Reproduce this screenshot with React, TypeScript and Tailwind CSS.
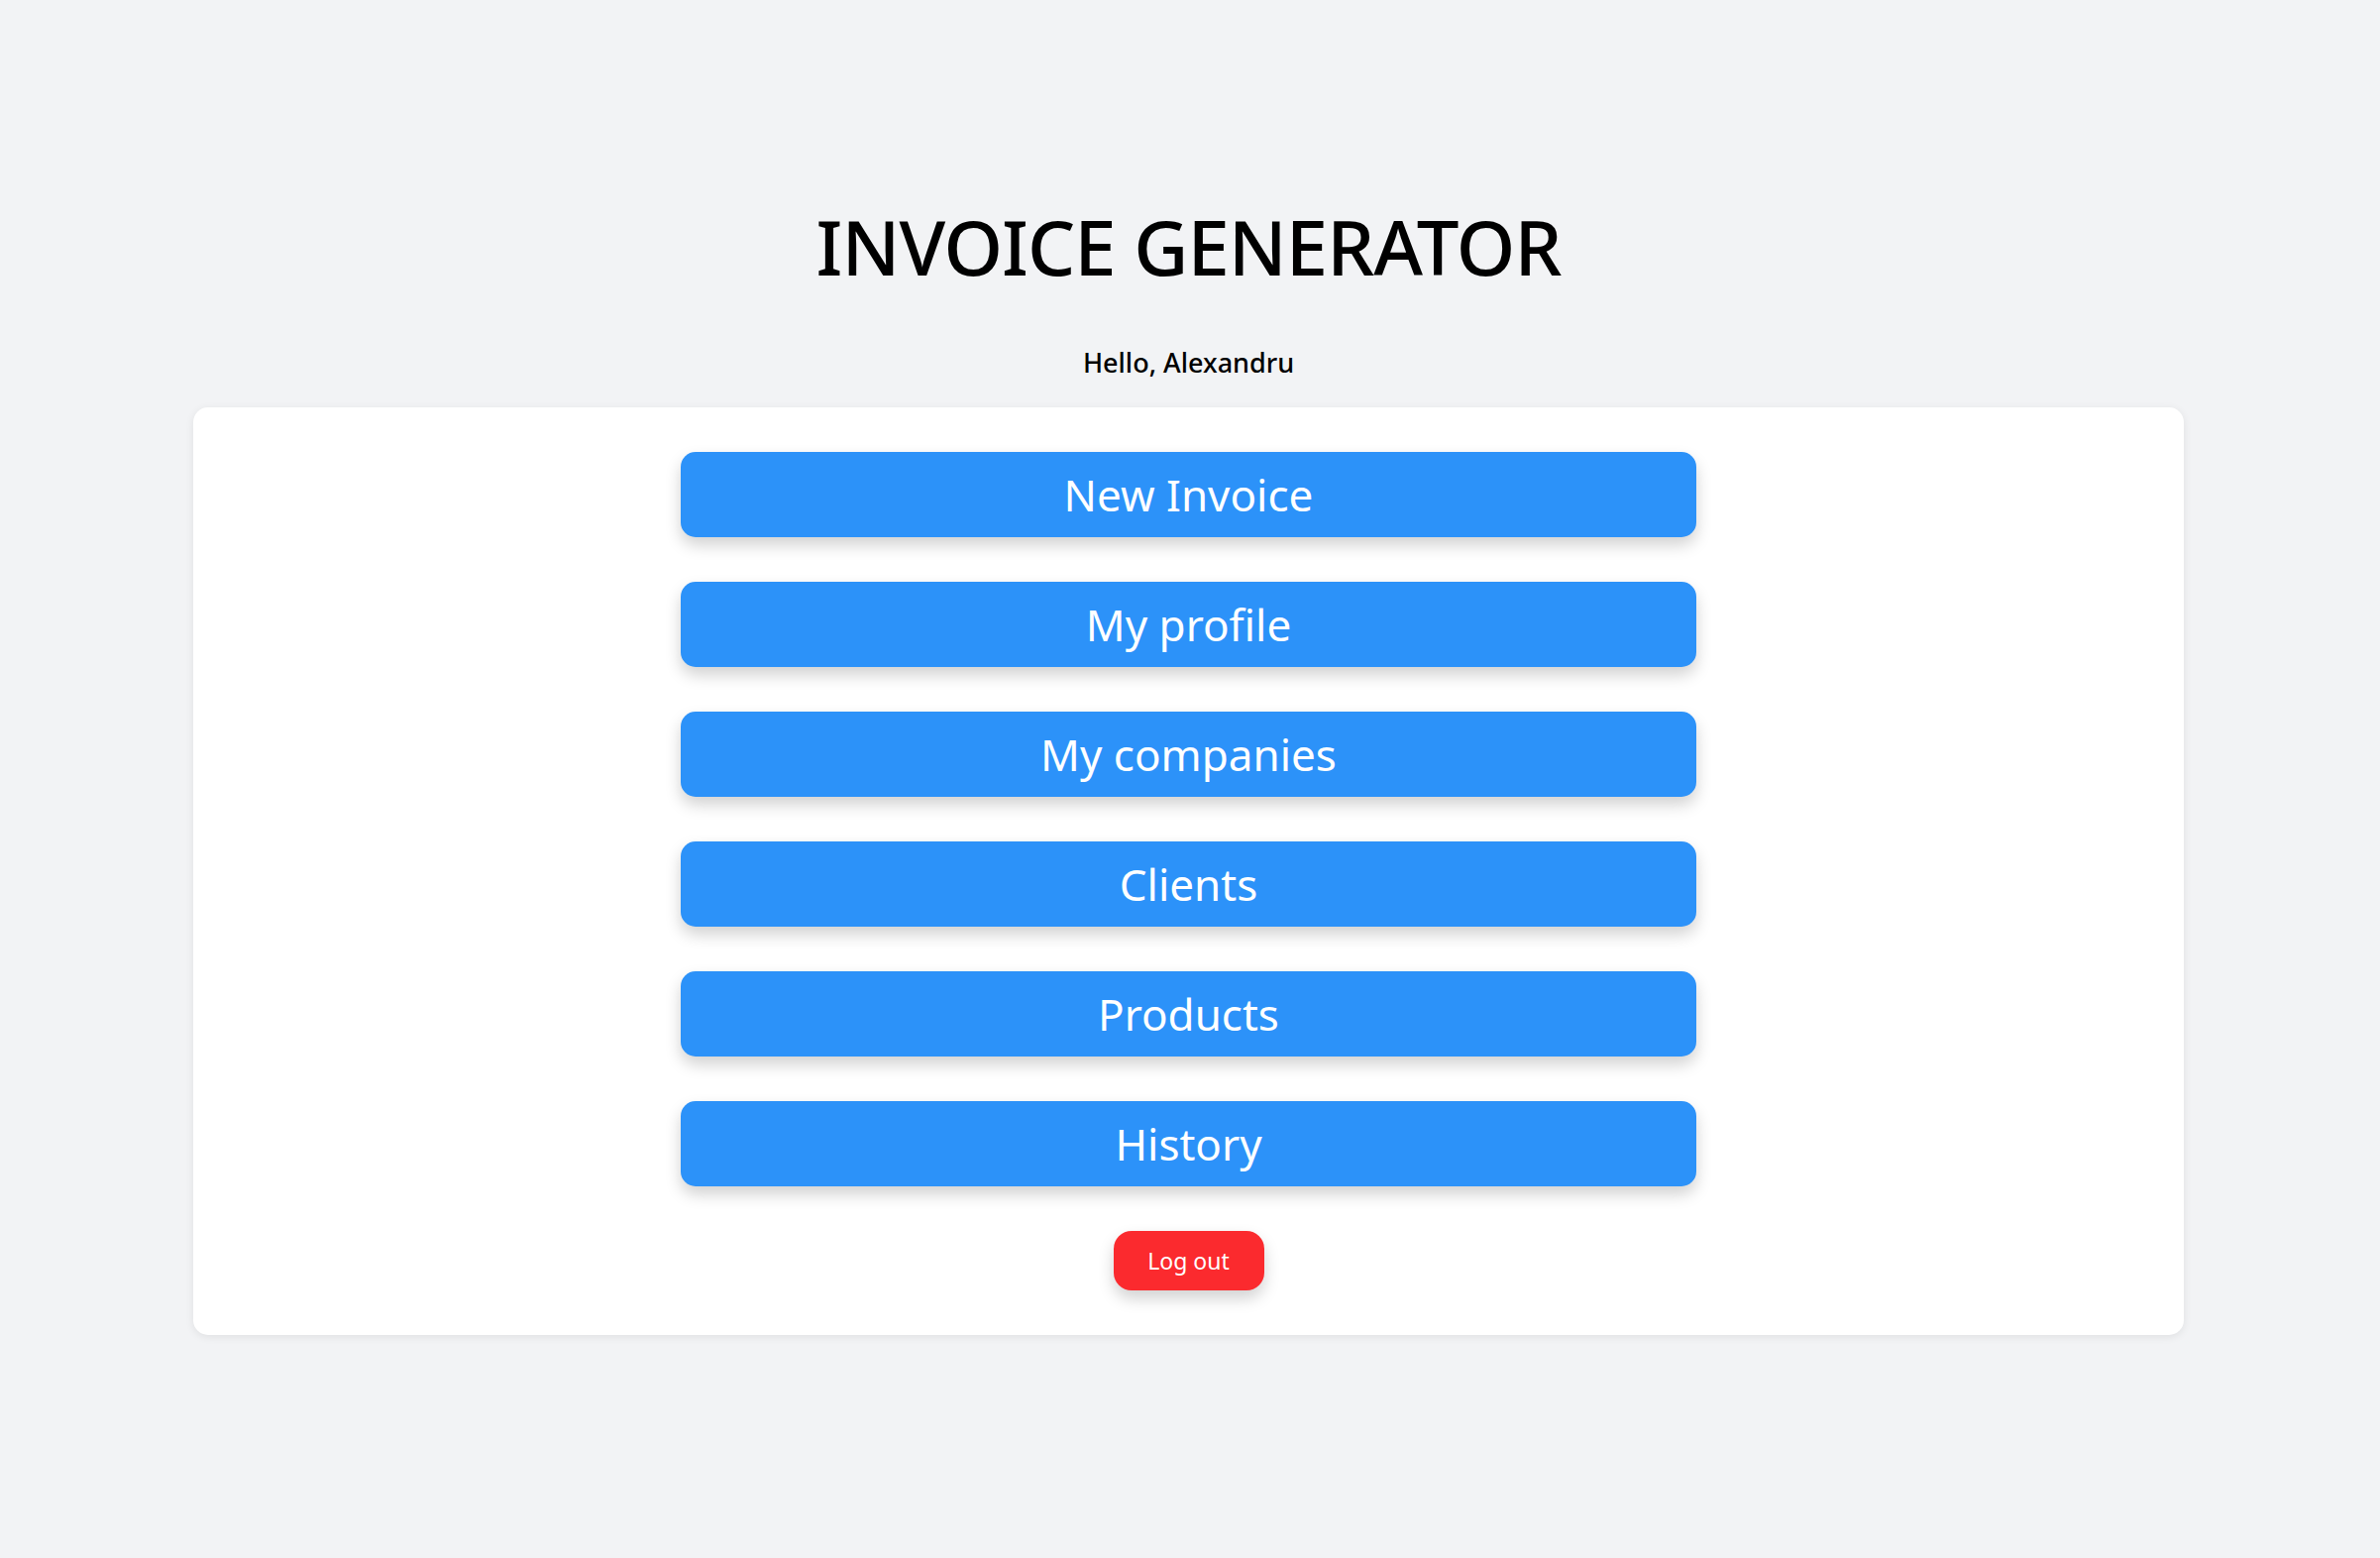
import React from "react";

const items = ["New Invoice", "My profile", "My companies", "Clients", "Products", "History"];

export default function App() {
  return (
    <div
      className="min-h-[1572px] w-full bg-[#f2f3f5] flex flex-col items-center pt-[211px] pr-[3px]"
      style={{ fontFamily: '"Noto Sans", "Open Sans", sans-serif' }}
    >
      <h1 className="text-[76px] leading-none font-medium text-black tracking-[-1px]">INVOICE GENERATOR</h1>
      <p className="mt-[63px] text-[27px] leading-[31px] font-medium text-black">Hello, Alexandru</p>
      <div className="mt-[30px] w-[2009px] bg-white rounded-[15px] shadow-[0_2px_8px_rgba(0,0,0,0.08)] px-[45px] py-[45px] flex flex-col items-center gap-[45px]">
        {items.map((t) => (
          <button
            key={t}
            className="w-[1025px] h-[86px] rounded-[15px] bg-[#2c92f9] text-white text-[44px] leading-none shadow-[0_8px_16px_rgba(0,0,0,0.18)] flex items-center justify-center"
          >
            {t}
          </button>
        ))}
        <button className="w-[152px] h-[60px] rounded-[18px] bg-[#fb2a2e] text-white text-[23px] leading-none shadow-[0_8px_16px_rgba(0,0,0,0.18)] flex items-center justify-center">
          Log out
        </button>
      </div>
    </div>
  );
}
